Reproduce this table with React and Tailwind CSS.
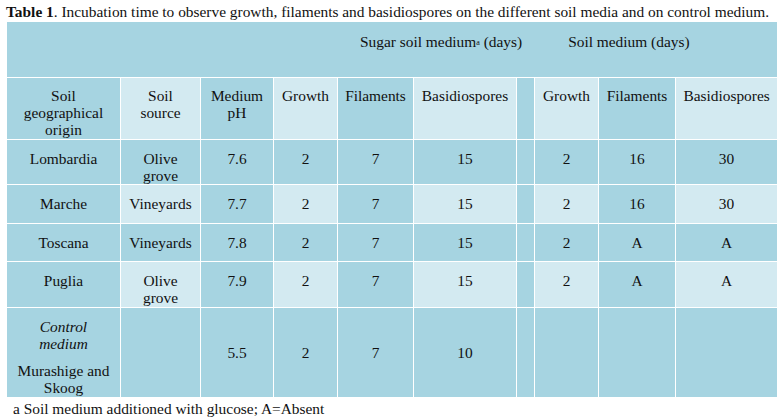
import React from 'react';

const DARK = 'bg-[#a6d4e1]';
const LIGHT = 'bg-[#d3eaf1]';

const widths = [114, 80, 73, 64, 76, 103, 18, 64, 77, 102];

const rows = [
  { h: 'h-[45px]', striped: false, cells: ['Lombardia', ['Olive', 'grove'], '7.6', '2', '7', '15', '', '2', '16', '30'] },
  { h: 'h-[39px]', striped: true, cells: ['Marche', 'Vineyards', '7.7', '2', '7', '15', '', '2', '16', '30'] },
  { h: 'h-[38px]', striped: false, cells: ['Toscana', 'Vineyards', '7.8', '2', '7', '15', '', '2', 'A', 'A'] },
  { h: 'h-[46px]', striped: true, cells: ['Puglia', ['Olive', 'grove'], '7.9', '2', '7', '15', '', '2', 'A', 'A'] },
];

const headers = [
  ['Soil', 'geographical', 'origin'],
  ['Soil', 'source'],
  ['Medium', 'pH'],
  ['Growth'],
  ['Filaments'],
  ['Basidiospores'],
  [''],
  ['Growth'],
  ['Filaments'],
  ['Basidiospores'],
];

const Lines = ({ value }) =>
  Array.isArray(value) ? value.map((l, i) => <div key={i}>{l}</div>) : value;

export default function App() {
  return (
    <div className="w-[782px] h-[417px] bg-white text-[#111] [font-family:Liberation_Serif,serif] text-[15.4px] leading-[17px]">
      <div className="pl-[6px] pt-[3px] h-[22px]">
        <span className="font-bold">Table 1</span>. Incubation time to observe growth, filaments and basidiospores on the different soil media and on control medium.
      </div>
      <table className="ml-[6px] w-[771px] table-fixed border-collapse">
        <colgroup>
          {widths.map((w, i) => (
            <col key={i} style={{ width: w }} />
          ))}
        </colgroup>
        <tbody>
          <tr>
            <td colSpan={10} className={`${DARK} h-[55px] align-top pt-[11px] border border-white border-t-0`}>
              <span className="ml-[353px]">
                Sugar soil medium<sup className="text-[8px] relative -top-[2px]">a</sup> (days)
              </span>
              <span className="ml-[46px]">Soil medium (days)</span>
            </td>
          </tr>
          <tr>
            {headers.map((h, i) => (
              <td
                key={i}
                className={`${i % 2 === 1 ? LIGHT : DARK} h-[62px] align-top pt-[9px] text-center border border-white`}
              >
                <Lines value={h} />
              </td>
            ))}
          </tr>
          {rows.map((r, ri) => (
            <tr key={ri}>
              {r.cells.map((c, i) => (
                <td
                  key={i}
                  className={`${r.striped && i % 2 === 1 ? LIGHT : DARK} ${r.h} align-top pt-[10px] text-center border border-white`}
                >
                  <Lines value={c} />
                </td>
              ))}
            </tr>
          ))}
          <tr>
            <td className={`${DARK} h-[90px] align-top pt-[10px] text-center border border-white`}>
              <div className="italic">Control</div>
              <div className="italic">medium</div>
              <div className="mt-[10px]">Murashige and</div>
              <div>Skoog</div>
            </td>
            {['', '5.5', '2', '7', '10', '', '', '', ''].map((c, i) => (
              <td key={i} className={`${DARK} align-middle text-center border border-white`}>
                {c}
              </td>
            ))}
          </tr>
        </tbody>
      </table>
      <div className="pl-[13px] pt-[2px]">a Soil medium additioned with glucose; A=Absent</div>
    </div>
  );
}
